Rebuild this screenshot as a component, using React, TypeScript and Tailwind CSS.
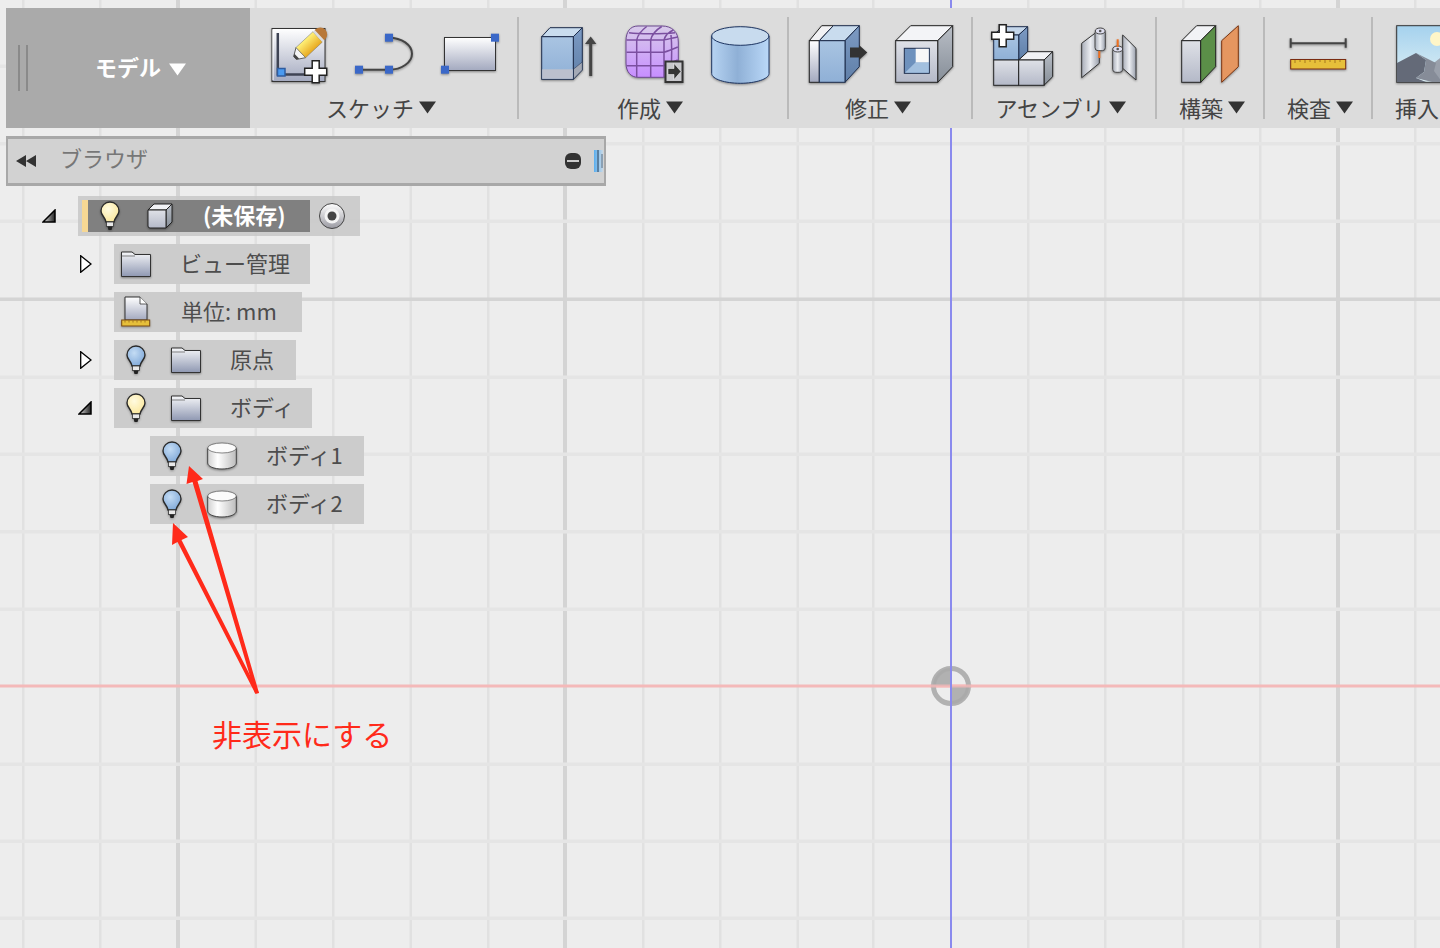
import React from 'react';

const verticals = [23, 100, 178, 255.5, 333, 410.5, 488, 565, 643, 720, 797.5, 873, 1028, 1105, 1183, 1260, 1338, 1415];
const horizontals = [66, 143.5, 221, 299, 377, 454, 531.5, 609, 764, 841, 918];
const majorV = [178, 565, 1338];
const majorH = [299];

// shared gradients for the toolbar and tree icons
const Defs = () => (
  <svg className="absolute w-0 h-0">
    <defs>
      <linearGradient id="paper" x1="0" y1="0" x2="0" y2="1">
        <stop offset="0" stopColor="#ffffff" />
        <stop offset="1" stopColor="#a3a9bf" />
      </linearGradient>
      <linearGradient id="folder" x1="0" y1="0" x2="0" y2="1">
        <stop offset="0" stopColor="#f6f7f9" />
        <stop offset="1" stopColor="#8f98b2" />
      </linearGradient>
      <linearGradient id="steel" x1="0" y1="0" x2="0" y2="1">
        <stop offset="0" stopColor="#dfe1e7" />
        <stop offset="1" stopColor="#b4b9c8" />
      </linearGradient>
      <linearGradient id="blueFace" x1="0" y1="0" x2="0" y2="1">
        <stop offset="0" stopColor="#a9c4e2" />
        <stop offset="1" stopColor="#8fb0d6" />
      </linearGradient>
      <linearGradient id="blueSide" x1="0" y1="0" x2="0" y2="1">
        <stop offset="0" stopColor="#7d9bc4" />
        <stop offset="1" stopColor="#5f7fa8" />
      </linearGradient>
      <linearGradient id="graySide" x1="0" y1="0" x2="0" y2="1">
        <stop offset="0" stopColor="#b9bec6" />
        <stop offset="1" stopColor="#868e98" />
      </linearGradient>
      <linearGradient id="cyl" x1="0" y1="0" x2="1" y2="0">
        <stop offset="0" stopColor="#b6d3f2" />
        <stop offset="0.45" stopColor="#8fb0d6" />
        <stop offset="1" stopColor="#bad8f8" />
      </linearGradient>
      <linearGradient id="whiteCyl" x1="0" y1="0" x2="1" y2="0">
        <stop offset="0" stopColor="#d0d0d0" />
        <stop offset="0.35" stopColor="#ffffff" />
        <stop offset="1" stopColor="#bcbcbc" />
      </linearGradient>
      <linearGradient id="metalCyl" x1="0" y1="0" x2="1" y2="0">
        <stop offset="0" stopColor="#a8adb8" />
        <stop offset="0.5" stopColor="#eceef2" />
        <stop offset="1" stopColor="#9aa0ac" />
      </linearGradient>
      <linearGradient id="purple" x1="0" y1="0" x2="0" y2="1">
        <stop offset="0" stopColor="#d8cbea" />
        <stop offset="1" stopColor="#c78eff" />
      </linearGradient>
      <linearGradient id="pencil" x1="0" y1="0" x2="0" y2="1">
        <stop offset="0" stopColor="#fff27a" />
        <stop offset="1" stopColor="#e8a920" />
      </linearGradient>
      <linearGradient id="sky" x1="0" y1="0" x2="0" y2="1">
        <stop offset="0" stopColor="#a5d2ee" />
        <stop offset="1" stopColor="#dff0f5" />
      </linearGradient>
      <radialGradient id="bulbBlue" cx="0.4" cy="0.35" r="0.7">
        <stop offset="0" stopColor="#c4dcf4" />
        <stop offset="1" stopColor="#7fa8d8" />
      </radialGradient>
      <radialGradient id="bulbYellow" cx="0.4" cy="0.35" r="0.7">
        <stop offset="0" stopColor="#fffbe0" />
        <stop offset="1" stopColor="#fbe79a" />
      </radialGradient>
      <linearGradient id="tri" x1="0" y1="0" x2="1" y2="0">
        <stop offset="0" stopColor="#e0e0e0" />
        <stop offset="1" stopColor="#222222" />
      </linearGradient>
      <linearGradient id="radio" x1="0" y1="0" x2="0" y2="1">
        <stop offset="0" stopColor="#ffffff" />
        <stop offset="1" stopColor="#9a9aa2" />
      </linearGradient>
    </defs>
  </svg>
);

const Caret = ({ white }: { white?: boolean }) => (
  <svg width="17" height="13" viewBox="0 0 17 13" className="shrink-0">
    <path d="M0 0.5h17L8.5 12.5z" fill={white ? '#ffffff' : '#333333'} />
  </svg>
);

const Ico = ({ children, w = 60 }: { children: React.ReactNode; w?: number }) => (
  <svg width={w} height="60" viewBox={`0 0 ${w} 60`} className="shrink-0 overflow-visible drop-shadow-[0_1px_1px_rgba(0,0,0,0.4)]">
    {children}
  </svg>
);

const Handle = ({ x, y }: { x: number; y: number }) => (
  <rect x={x - 4} y={y - 4} width="8" height="8" fill="#3b68c8" />
);

const Plus = ({ x, y }: { x: number; y: number }) => (
  <path
    d={`M${x - 3.5} ${y - 11}h7v7.5h7.5v7h-7.5v7.5h-7v-7.5h-7.5v-7h7.5z`}
    fill="#ffffff"
    stroke="#222"
    strokeWidth="1.5"
  />
);

const SketchIcon = () => (
  <Ico>
    <rect x="4" y="3.5" width="53" height="53" fill="url(#paper)" stroke="#333" />
    <path d="M5 55V4.5H56" fill="none" stroke="#fff" />
    <path d="M9.8 8V49.5H37" fill="none" stroke="#3f4454" strokeWidth="2.5" />
    <rect x="9.5" y="43.5" width="7.5" height="7.5" fill="#4a9af0" stroke="#2f5c9f" strokeWidth="1.5" />
    <g transform="translate(27 33) rotate(-43)">
      <path d="M0 -2L8 -7V7L0 2Z" fill="#f4f4f4" stroke="#444" strokeWidth="0.8" />
      <path d="M0 -2L2.5 -3.5V3.5L0 2Z" fill="#444" />
      <rect x="8" y="-7" width="23" height="14" fill="url(#pencil)" stroke="#777" strokeWidth="0.5" />
      <rect x="31" y="-7" width="2.5" height="14" fill="#ddd" />
      <path d="M33.5 -7h1a7 7 0 0 1 0 14h-1z" fill="#b87838" />
    </g>
    <Plus x={47.7} y={46.7} />
  </Ico>
);

const CurveIcon = () => (
  <Ico>
    <path d="M5 44.7H35M35 12.7a23 16 0 0 1 0 32" fill="none" stroke="#444" strokeWidth="2" />
    <Handle x={5} y={44.7} />
    <Handle x={35} y={44.7} />
    <Handle x={35} y={12.7} />
  </Ico>
);

const RectIcon = () => (
  <Ico>
    <rect x="4.5" y="12.5" width="51" height="33" fill="url(#paper)" stroke="#333" />
    <Handle x={55} y={12.7} />
    <Handle x={5} y={44.7} />
  </Ico>
);

const ExtrudeIcon = () => (
  <Ico>
    <path d="M3.7 11.7L12 2.7H44.3L35.3 11.7z" fill="#c9dcee" stroke="#1d2c4a" strokeLinejoin="round" />
    <path d="M35.3 11.7L44.3 2.7V45L35.3 54.3z" fill="url(#blueSide)" stroke="#1d2c4a" />
    <path d="M35.3 44.3L44.3 37V45L35.3 54.3z" fill="#a4a9b5" stroke="#1d2c4a" strokeWidth="0.5" />
    <rect x="3.7" y="11.7" width="31.6" height="42.6" fill="url(#blueFace)" stroke="#1d2c4a" />
    <rect x="4.2" y="44.3" width="30.6" height="9.5" fill="#bcc0cd" />
    <path d="M52.7 51V15" stroke="#444" strokeWidth="3" />
    <path d="M47 19L52.7 11.5L58.4 19z" fill="#444" />
  </Ico>
);

const FormIcon = () => (
  <Ico>
    <path d="M14 1H38C48 1 54.3 7 54.3 17V38C54.3 47 48 52.3 39 52.3H14C7 52.3 2 47 2 38V16C2 7 6 1 14 1Z" fill="url(#purple)" stroke="#6d4a90" />
    <path
      d="M2.5 15H40M2.5 27.3H40M2.5 40.7H40M12.7 15V52M26.7 15V52M40 15V52M12.7 15C14 9 18 5 22.7 1.5M26.7 15C28 9 32 5 37.7 1.5M40 15C41 11 45 7 49.3 5M5 7.7C15 9 38 9 51 7.7M40 15C44 14 49 13 53.5 12M40 27.3C44 26 49 24 53.8 22M40 40.7C44 39 49 37 53.8 35M47 10C48 20 48 30 47 47"
      fill="none"
      stroke="#7b4fa0"
      strokeWidth="1.5"
    />
    <rect x="41.5" y="36.5" width="17" height="20.5" fill="#c8c8cc" stroke="#333" strokeWidth="2" />
    <path d="M44 43.5h6v-5l7 8-7 8v-5h-6z" fill="#333" stroke="#fff" strokeWidth="0.5" />
  </Ico>
);

const CylinderIcon = () => (
  <Ico>
    <path d="M1.7 11V48.5C1.7 54 15 58.3 30.3 58.3S59 54 59 48.5V11z" fill="url(#cyl)" stroke="#1d3461" />
    <ellipse cx="30.3" cy="11" rx="28.6" ry="9.3" fill="#c8dbee" stroke="#1d3461" />
  </Ico>
);

const PressPullIcon = () => (
  <Ico>
    <path d="M1.3 15.7L13.7 .7H25.3L11.3 15.7z" fill="#f2f2f4" stroke="#222" />
    <rect x="1.3" y="15.7" width="10" height="41.6" fill="url(#paper)" stroke="#222" />
    <path d="M11.3 15.7L25.3 .7H51.3L37 15.7z" fill="#c9dcee" stroke="#1d2c4a" />
    <path d="M37 15.7L51.3 .7V41.7L37 57.3z" fill="url(#blueSide)" stroke="#1d2c4a" />
    <rect x="11.3" y="15.7" width="25.7" height="41.6" fill="url(#blueFace)" stroke="#1d2c4a" />
    <path d="M42 22.5h9v-2.5l8.3 7.5l-8.3 7.5v-2.5h-9z" fill="#333" />
  </Ico>
);

const ShellIcon = () => (
  <Ico>
    <path d="M1.7 15.7L16.7 .7H58.7L43.7 15.7z" fill="#f3f4f7" stroke="#222" />
    <path d="M43.7 15.7L58.7 .7V41.7L43.7 57.3z" fill="url(#graySide)" stroke="#222" />
    <rect x="1.7" y="15.7" width="42" height="41.6" fill="url(#steel)" stroke="#222" />
    <rect x="10.3" y="23.3" width="25" height="25" fill="#6e91bd" stroke="#1d2c4a" />
    <path d="M21.7 37.3h13.1v10.5H11z" fill="#a3c0df" />
    <rect x="21.7" y="23.8" width="13.1" height="13.5" fill="#f8f8f8" />
  </Ico>
);

const ComponentIcon = () => (
  <Ico>
    <path d="M.7 10L9.7 1.7H34.7L25.7 10z" fill="#c4d6ea" stroke="#1d2c4a" />
    <path d="M25.7 10L34.7 1.7V26.7L25.7 35z" fill="url(#blueSide)" stroke="#1d2c4a" />
    <rect x=".7" y="10" width="25" height="25" fill="url(#blueFace)" stroke="#1d2c4a" />
    <rect x=".7" y="35" width="25" height="25.3" fill="url(#steel)" stroke="#222" />
    <path d="M25.7 35L34.7 26.7H59.7L51 35z" fill="#f1f2f5" stroke="#222" />
    <path d="M51 35L59.7 26.7V51.7L51 60.3z" fill="url(#graySide)" stroke="#222" />
    <rect x="25.7" y="35" width="25.3" height="25.3" fill="url(#steel)" stroke="#222" />
    <Plus x={9.7} y={10.7} />
  </Ico>
);

const JointIcon = () => (
  <Ico w={58}>
    <path d="M2.7 18.3L20.3 5V38.3L2.7 52.7z" fill="url(#metalCyl)" stroke="#333" />
    <rect x="16" y="5" width="10.3" height="20.7" rx="3" fill="url(#metalCyl)" stroke="#444" />
    <ellipse cx="21.2" cy="6" rx="5" ry="3" fill="#dde" stroke="#444" />
    <circle cx="21.2" cy="6" r="1.3" fill="#555" />
    <path d="M20.3 26V33" stroke="#f07020" strokeWidth="2" />
    <path d="M43.7 10L57 23.3V55L43.7 43.3z" fill="url(#metalCyl)" stroke="#333" />
    <rect x="33.7" y="23" width="10" height="24.3" rx="3" fill="url(#metalCyl)" stroke="#444" />
    <ellipse cx="38.7" cy="24" rx="5" ry="3" fill="#dde" stroke="#444" />
    <circle cx="38.7" cy="24" r="1.3" fill="#555" />
    <path d="M38.7 14.3V22" stroke="#f07020" strokeWidth="2" />
  </Ico>
);

const PlaneIcon = () => (
  <Ico>
    <path d="M.7 15.7L15.7 .7H34.7L19.7 15.7z" fill="#f2f3f6" stroke="#222" />
    <rect x=".7" y="15.7" width="19" height="41.6" fill="url(#steel)" stroke="#222" />
    <path d="M19.7 15.7L34.7 .7V41.7L19.7 57.3z" fill="#5b8f48" stroke="#222" />
    <path d="M40.7 15.7L57.3 .7V41.7L40.7 57.3z" fill="#e59660" stroke="#7a3410" />
  </Ico>
);

const MeasureIcon = () => (
  <Ico>
    <path d="M1.7 18.3H56.7" stroke="#444" strokeWidth="2" />
    <path d="M1.7 13.3V22.7M56.7 13.3V22.7" stroke="#444" strokeWidth="2" />
    <rect x="1.7" y="34.5" width="55" height="9.5" fill="#e6bf3a" stroke="#7a2c10" />
    <path d="M6 35v3M11 35v2M16 35v3M21 35v2M26 35v3M31 35v2M36 35v3M41 35v2M46 35v3M51 35v2" stroke="#8a5a18" strokeWidth="0.7" />
  </Ico>
);

const InsertIcon = () => (
  <Ico>
    <rect x=".7" y=".7" width="70" height="56.6" fill="url(#sky)" stroke="#333" />
    <circle cx="41" cy="14" r="7" fill="#fff6c8" />
    <path d="M40 57L30 44L48 30L72 40V57z" fill="#9aa0ab" />
    <path d="M1 38L20 28L30 35L28 47L20 53L30 57H1z" fill="#646a78" />
    <path d="M20 28L30 35L28 47L20 53L36 57H46L38 46L40 38z" fill="#868c98" />
  </Ico>
);

const Bulb = ({ on }: { on?: boolean }) => (
  <svg width="20" height="30" viewBox="0 0 20 30" className="shrink-0 drop-shadow-[0_1px_1px_rgba(0,0,0,0.3)]">
    <path
      d="M10 1C5 1 1 5 1 10C1 14 5 16 6 21H14C15 16 19 14 19 10C19 5 15 1 10 1Z"
      fill={on ? 'url(#bulbYellow)' : 'url(#bulbBlue)'}
      stroke="#2a2a2a"
      strokeWidth="1.4"
    />
    <rect x="6.5" y="21" width="7" height="4.5" fill="#e8e8e8" stroke="#333" strokeWidth="0.8" />
    <path d="M7.5 25.5h5L11.5 29h-3z" fill="#222" />
  </svg>
);

const Folder = () => (
  <svg width="30" height="26" viewBox="0 0 30 26" className="shrink-0 drop-shadow-[0_1px_1px_rgba(0,0,0,0.4)]">
    <path d="M.5 1H11L14 3.5H29.5V25.5H.5z" fill="url(#folder)" stroke="#333" />
    <path d="M.5 5H14" stroke="#555" strokeWidth="0.7" />
  </svg>
);

const Cube = () => (
  <svg width="26" height="26" viewBox="0 0 26 26" className="shrink-0 drop-shadow-[0_1px_1px_rgba(0,0,0,0.4)]">
    <path d="M1 7L7 1H25L19 7z" fill="#f2f3f6" stroke="#222" />
    <path d="M19 7L25 1V19L19 25z" fill="url(#graySide)" stroke="#222" />
    <path d="M1 7H19V25H3Q1 25 1 23z" fill="url(#steel)" stroke="#222" />
  </svg>
);

const SmallCyl = () => (
  <svg width="30" height="28" viewBox="0 0 30 28" className="shrink-0 drop-shadow-[0_1px_1px_rgba(0,0,0,0.4)]">
    <path d="M.7 6V21C.7 24.5 7 27 15 27S29.3 24.5 29.3 21V6z" fill="url(#whiteCyl)" stroke="#444" />
    <ellipse cx="15" cy="6" rx="14.3" ry="5" fill="#fbfbfb" stroke="#555" strokeWidth="0.7" />
  </svg>
);

const UnitDoc = () => (
  <svg width="30" height="32" viewBox="0 0 30 32" className="shrink-0 drop-shadow-[0_1px_1px_rgba(0,0,0,0.3)]">
    <path d="M4 1H19L26 8V24H4z" fill="url(#paper)" stroke="#333" />
    <path d="M19 1V8H26" fill="#fff" stroke="#333" strokeWidth="0.8" />
    <rect x=".7" y="24" width="28" height="6" fill="#e6bf3a" stroke="#7a4a10" />
    <path d="M4 24.5v2M8 24.5v2M12 24.5v2M16 24.5v2M20 24.5v2M24 24.5v2" stroke="#8a5a18" strokeWidth="0.7" />
  </svg>
);

const Expanded = () => (
  <svg width="14" height="14" viewBox="0 0 14 14">
    <path d="M1 13L13 1V13z" fill="url(#tri)" stroke="#000" strokeWidth="1.5" />
  </svg>
);

const Collapsed = () => (
  <svg width="12" height="18" viewBox="0 0 12 18">
    <path d="M.7 .7L11 9L.7 17.3z" fill="#ffffff" stroke="#000" strokeWidth="1.3" />
  </svg>
);

const Separator = () => <div className="w-0.5 h-[102px] my-[9px] shrink-0 bg-[#bababa]" />;

const ToolLabel = ({ text, className }: { text: string; className?: string }) => (
  <div className={`flex items-center justify-center gap-[5px] text-[22px] leading-[30px] text-[#444] mt-[7px] ${className ?? ''}`}>
    <span>{text}</span>
    <Caret />
  </div>
);

const TreeText = ({ children, className }: { children: React.ReactNode; className: string }) => (
  <span className={`text-[22px] leading-[30px] mb-[5px] text-[#4d4d4d] whitespace-nowrap ${className}`}>{children}</span>
);

export default function App() {
  return (
    <div className="relative w-[1440px] h-[948px] overflow-hidden bg-[#ededed] font-['Noto_Sans_CJK_JP',sans-serif]">
      <Defs />

      {/* model space grid */}
      <svg className="absolute inset-0" width="1440" height="948">
        {verticals.map((x) => (
          <rect key={x} x={majorV.includes(x) ? x - 2 : x - 1} y="0" width={majorV.includes(x) ? 4 : 2.5} height="948" fill={majorV.includes(x) ? '#d4d4d4' : '#e1e1e1'} />
        ))}
        {horizontals.map((y) => (
          <rect key={y} x="0" y={y - 1.5} width="1440" height="3.5" fill={majorH.includes(y) ? '#d4d4d4' : '#e5e5e5'} />
        ))}
        <rect x="0" y="684.5" width="1440" height="3" fill="#f4b9b9" />
        <rect x="950" y="0" width="2" height="948" fill="#8a8aee" />
      </svg>

      {/* origin marker */}
      <svg className="absolute left-[930px] top-[665px]" width="42" height="42" viewBox="0 0 42 42">
        <circle cx="21" cy="21" r="17.5" fill="none" stroke="#aaaaaa" strokeWidth="5" opacity="0.9" />
        <path d="M21 21V3A18 18 0 0 0 3 21zM21 21V39A18 18 0 0 0 39 21z" fill="#aaaaaa" opacity="0.9" />
        <path d="M0 21H42" stroke="#f4b9b9" strokeWidth="3" opacity="0.8" />
        <path d="M21 0V42" stroke="#8a8aee" strokeWidth="2" />
      </svg>

      <div className="relative pt-2 pl-1.5">
        {/* ribbon */}
        <div className="flex h-[120px] w-[1434px] overflow-hidden bg-[#dcdcdc]">
          <div className="flex items-center w-[244px] shrink-0 bg-[#aaaaaa]">
            <div className="w-0.5 h-[46px] ml-3 bg-[#8a8a8a]" />
            <div className="w-0.5 h-[46px] ml-1.5 bg-[#8a8a8a]" />
            <span className="ml-[67px] mb-1 text-[22px] font-bold leading-[30px] text-white">モデル</span>
            <span className="ml-2 mt-0.5"><Caret white /></span>
          </div>

          <div className="w-[267px] shrink-0 pt-[17px] pl-px">
            <div className="flex justify-center gap-[26px]">
              <SketchIcon />
              <CurveIcon />
              <RectIcon />
            </div>
            <ToolLabel text="スケッチ" className="pr-1.5" />
          </div>
          <Separator />

          <div className="w-[268px] shrink-0 pt-[17px] pl-0.5">
            <div className="flex justify-center gap-[26px]">
              <ExtrudeIcon />
              <FormIcon />
              <CylinderIcon />
            </div>
            <ToolLabel text="作成" className="pr-2" />
          </div>
          <Separator />

          <div className="w-[182px] shrink-0 pt-[17px] pl-0.5">
            <div className="flex justify-center gap-[26px]">
              <PressPullIcon />
              <ShellIcon />
            </div>
            <ToolLabel text="修正" className="pr-1.5" />
          </div>
          <Separator />

          <div className="w-[182px] shrink-0 pt-[17px] pl-0.5">
            <div className="flex justify-center gap-[26px]">
              <ComponentIcon />
              <JointIcon />
            </div>
            <ToolLabel text="アセンブリ" className="pr-2" />
          </div>
          <Separator />

          <div className="w-[106px] shrink-0 pt-[17px] pl-0.5">
            <div className="flex justify-center">
              <PlaneIcon />
            </div>
            <ToolLabel text="構築" className="pl-0.5" />
          </div>
          <Separator />

          <div className="w-[106px] shrink-0 pt-[17px] pl-0.5">
            <div className="flex justify-center">
              <MeasureIcon />
            </div>
            <ToolLabel text="検査" className="pl-0.5" />
          </div>
          <Separator />

          <div className="w-[66px] shrink-0 pt-[17px] pl-[23px]">
            <InsertIcon />
            <div className="text-[22px] leading-[30px] text-[#444] mt-[7px] -ml-px whitespace-nowrap">挿入</div>
          </div>
        </div>

        {/* browser header */}
        <div className="flex items-center w-[600px] h-[50px] mt-2 border-x-2 border-y-[3px] border-[#a8a8a8] bg-[#d2d2d2]">
          <svg width="20" height="12" viewBox="0 0 20 12" className="ml-2 shrink-0">
            <path d="M0 6L10 0V12zM10 6L20 0V12z" fill="#333" />
          </svg>
          <span className="ml-6 mb-2 text-[22px] leading-[30px] text-[#777]">ブラウザ</span>
          <div className="flex items-center justify-center ml-auto w-4 h-4 shrink-0 rounded-[6px] bg-[#333]">
            <div className="w-3 h-0.5 bg-[#ccc]" />
          </div>
          <div className="flex gap-[2px] ml-[13px] mr-px pl-[3px] w-[9px] h-[22px] shrink-0 bg-gradient-to-r from-[#58aeee] to-[#c6d8e6]">
            <div className="w-0.5 shrink-0 bg-[#5a7fa0]" />
            <div className="w-0.5 shrink-0 bg-[#8aa0b4] my-1" />
          </div>
        </div>

        {/* browser tree */}
        <div className="flex flex-col gap-2 mt-[10px]">
          <div className="flex items-center h-10 pl-[36px]">
            <div className="w-[36px]"><Expanded /></div>
            <div className="flex items-center w-[282px] h-10 pl-1 bg-[#c9c9c9]/90">
              <div className="flex items-center w-[228px] h-8 bg-[#808080]">
                <div className="w-1.5 h-8 bg-[#f7d894]" />
                <div className="ml-3"><Bulb on /></div>
                <div className="ml-[27px]"><Cube /></div>
                <span className="ml-[30px] mb-[5px] text-[22px] font-bold leading-[30px] text-white whitespace-nowrap">(未保存)</span>
              </div>
              <svg width="28" height="28" viewBox="0 0 28 28" className="ml-2 shrink-0">
                <circle cx="14" cy="14" r="12.5" fill="url(#radio)" stroke="#444" />
                <circle cx="14" cy="14" r="7.5" fill="#f4f4f4" />
                <circle cx="14" cy="14" r="4.5" fill="#444" />
              </svg>
            </div>
          </div>

          <div className="flex items-center h-10 pl-[72px]">
            <div className="w-[36px] pl-[2px] flex items-center"><Collapsed /></div>
            <div className="flex items-center w-[196px] h-10 pl-[7px] bg-[#cccccc]">
              <Folder />
              <TreeText className="ml-[29px]">ビュー管理</TreeText>
            </div>
          </div>

          <div className="flex items-center h-10 pl-[108px]">
            <div className="flex items-center w-[188px] h-10 pl-[7px] bg-[#cccccc]">
              <UnitDoc />
              <TreeText className="ml-[30px]">単位: mm</TreeText>
            </div>
          </div>

          <div className="flex items-center h-10 pl-[72px]">
            <div className="w-[36px] pl-[2px] flex items-center"><Collapsed /></div>
            <div className="flex items-center w-[182px] h-10 pl-3 bg-[#cccccc]">
              <Bulb />
              <div className="ml-[25px]"><Folder /></div>
              <TreeText className="ml-[29px]">原点</TreeText>
            </div>
          </div>

          <div className="flex items-center h-10 pl-[72px]">
            <div className="w-[36px]"><Expanded /></div>
            <div className="flex items-center w-[198px] h-10 pl-3 bg-[#cccccc]">
              <Bulb on />
              <div className="ml-[25px]"><Folder /></div>
              <TreeText className="ml-[29px]">ボディ</TreeText>
            </div>
          </div>

          <div className="flex items-center h-10 pl-[144px]">
            <div className="flex items-center w-[214px] h-10 pl-3 bg-[#cccccc]">
              <Bulb />
              <div className="ml-[25px]"><SmallCyl /></div>
              <TreeText className="ml-[29px]">ボディ1</TreeText>
            </div>
          </div>

          <div className="flex items-center h-10 pl-[144px]">
            <div className="flex items-center w-[214px] h-10 pl-3 bg-[#cccccc]">
              <Bulb />
              <div className="ml-[25px]"><SmallCyl /></div>
              <TreeText className="ml-[29px]">ボディ2</TreeText>
            </div>
          </div>
        </div>
      </div>

      {/* annotation arrows */}
      <svg className="absolute inset-0 pointer-events-none" width="1440" height="948">
        <path d="M189 466L203 479L197.5 481L259 693L255 693L192.5 482L186.5 484z" fill="#ff2a1a" />
        <path d="M173 523L188 537L181.5 540L259 693L255.5 694L177.5 542L172 545z" fill="#ff2a1a" />
      </svg>
      <div className="absolute left-[212px] top-[711px] text-[30px] leading-[44px] text-[#ff2a1a] whitespace-nowrap">非表示にする</div>
    </div>
  );
}
